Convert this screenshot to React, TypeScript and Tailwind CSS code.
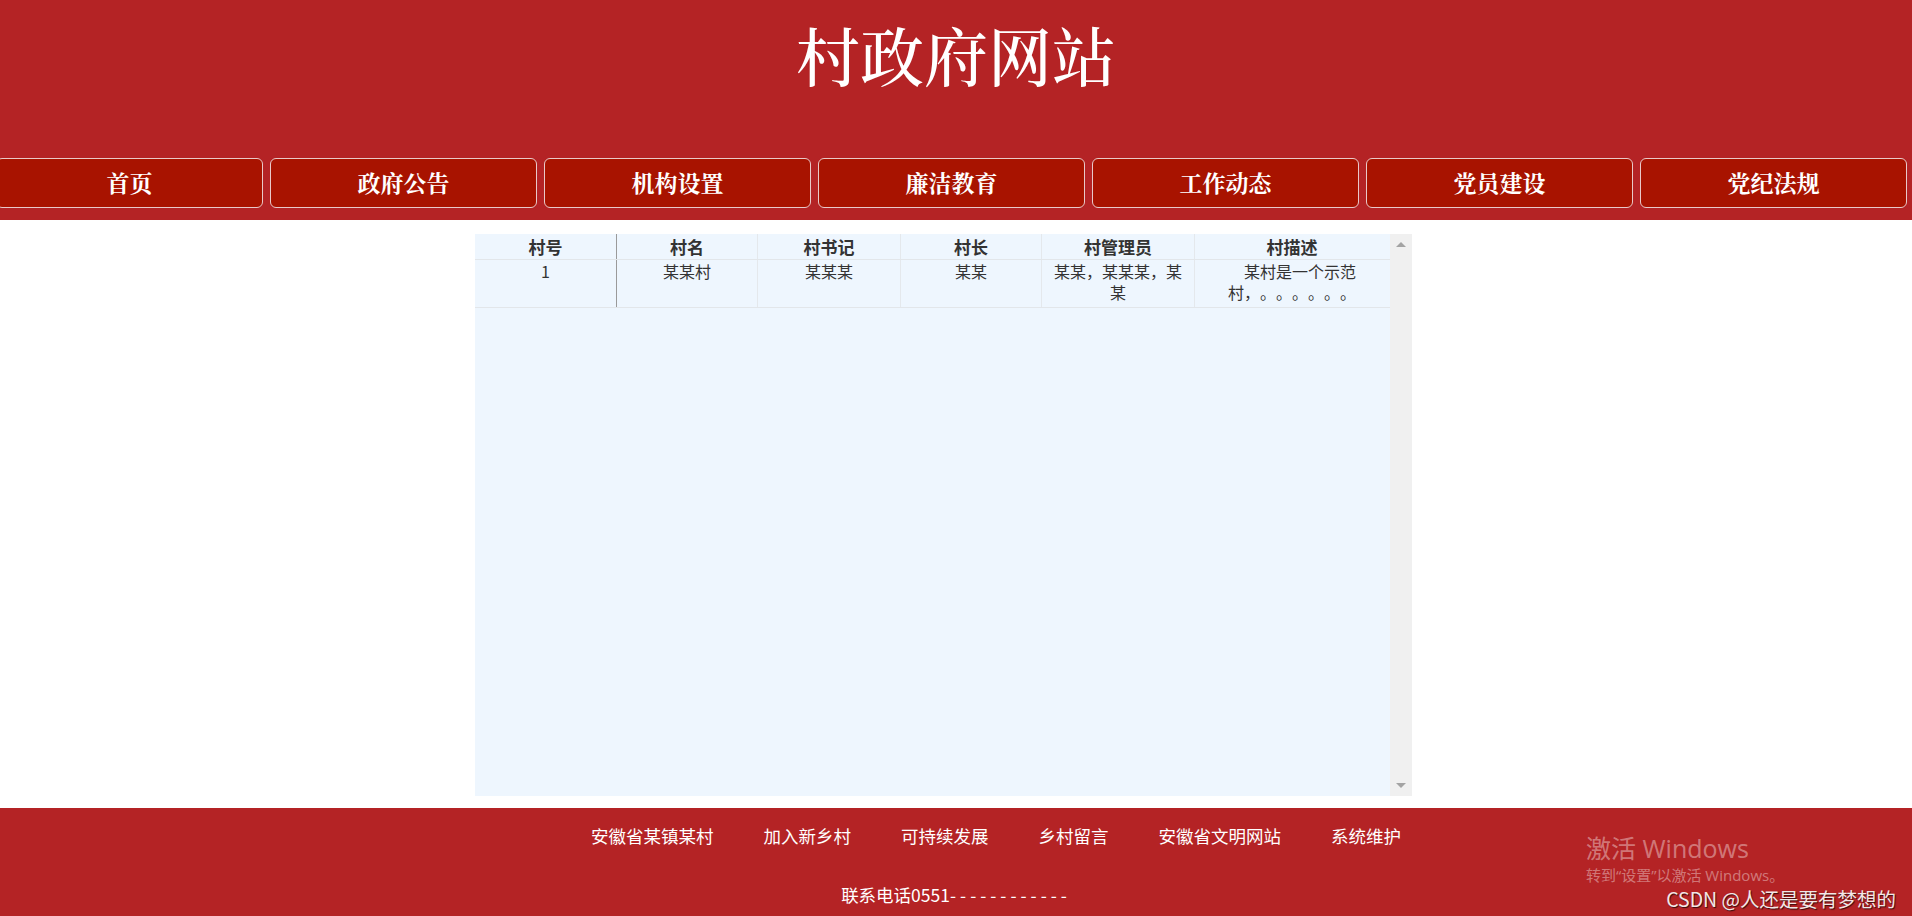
import React from "react";

const navItems = ["首页", "政府公告", "机构设置", "廉洁教育", "工作动态", "党员建设", "党纪法规"];

const footerLinks = ["安徽省某镇某村", "加入新乡村", "可持续发展", "乡村留言", "安徽省文明网站", "系统维护"];

const columns = [
  { title: "村号", w: "w-[142px]", divider: "border-[#9a9a9a]" },
  { title: "村名", w: "w-[141px]", divider: "border-[#e4e8ec]" },
  { title: "村书记", w: "w-[143px]", divider: "border-[#e4e8ec]" },
  { title: "村长", w: "w-[141px]", divider: "border-[#e4e8ec]" },
  { title: "村管理员", w: "w-[153px]", divider: "border-[#e4e8ec]" },
  { title: "村描述", w: "w-[195px]", divider: "border-transparent" },
];

const row: React.ReactNode[] = [
  "1",
  "某某村",
  "某某某",
  "某某",
  <>
    某某，某某某，某
    <br />
    某
  </>,
  <div className="text-right pr-[33px]">
    &nbsp;&nbsp;某村是一个示范
    <br />
    村，。。。。。。
  </div>,
];

export default function App() {
  return (
    <div className="relative w-[1912px] h-[916px] overflow-hidden bg-white font-['Noto_Sans_CJK_SC',sans-serif] [text-spacing-trim:space-all]">
      {/* header */}
      <header className="h-[220px] bg-[#b42325] overflow-hidden">
        <h1 className="pt-[13px] text-center text-[64px] leading-[80px] text-white font-['Noto_Serif_CJK_SC','Noto_Sans_CJK_SC',serif] font-medium">
          村政府网站
        </h1>
        <nav className="mt-[65px] flex -ml-[4px] gap-[7px]">
          {navItems.map((item) => (
            <div
              key={item}
              className="w-[267px] h-[50px] shrink-0 rounded-[6px] border border-[#e9c9c9] bg-[#a81300] flex items-center justify-center text-white text-[23px] font-bold font-['Noto_Serif_CJK_SC','Noto_Sans_CJK_SC',serif]"
            >
              {item}
            </div>
          ))}
        </nav>
      </header>

      {/* table */}
      <main className="h-[588px] pt-[14px] flex justify-center pr-[25px]">
        <div className="w-[937px] h-[562px] bg-[#eef6fe] flex">
          <div className="w-[915px] text-[#333]">
            <div className="flex h-[26px] border-b border-[#e2e6ea]">
              {columns.map((c) => (
                <div key={c.title} className={`${c.w} border-r ${c.divider} text-center text-[17px] leading-[25px] font-bold`}>
                  {c.title}
                </div>
              ))}
            </div>
            <div className="flex h-[48px] border-b border-[#e2e6ea]">
              {columns.map((c, i) => (
                <div key={c.title} className={`${c.w} border-r ${c.divider} text-center text-[16px] leading-[21px] pt-[1px]`}>
                  {row[i]}
                </div>
              ))}
            </div>
          </div>
          <div className="w-[22px] bg-[#f0f0f0] flex flex-col items-center justify-between py-[8px]">
            <div className="w-0 h-0 border-l-[5px] border-r-[5px] border-b-[5px] border-l-transparent border-r-transparent border-b-[#a3a3a3]" />
            <div className="w-0 h-0 border-l-[5px] border-r-[5px] border-t-[5px] border-l-transparent border-r-transparent border-t-[#a3a3a3]" />
          </div>
        </div>
      </main>

      {/* footer */}
      <footer className="h-[108px] bg-[#b42325] text-white">
        <ul className="pt-[16px] flex justify-center gap-[50px] pl-[80px] text-[17.5px] leading-[24px]">
          {footerLinks.map((l) => (
            <li key={l}>{l}</li>
          ))}
        </ul>
        <p className="mt-[35px] text-center text-[17.5px] leading-[24px]">
          联系电话0551<span className="tracking-[4px]">------------</span>
        </p>
      </footer>

      {/* activation watermark */}
      <div className="absolute left-[1586px] top-[833px] text-[25px] leading-[30px] text-white/40 font-['Open_Sans','Noto_Sans_CJK_SC',sans-serif]">
        激活 Windows
      </div>
      <div className="absolute left-[1586px] top-[865px] text-[15px] leading-[20px] text-white/40 font-['Open_Sans','Noto_Sans_CJK_SC',sans-serif]">
        转到“设置”以激活 Windows。
      </div>
      <div className="absolute right-[16px] top-[886px] text-[19.5px] leading-[26px] text-[#f3e6e6] [text-shadow:1px_1px_1px_rgba(0,0,0,0.7)]">
        CSDN @人还是要有梦想的
      </div>
    </div>
  );
}
